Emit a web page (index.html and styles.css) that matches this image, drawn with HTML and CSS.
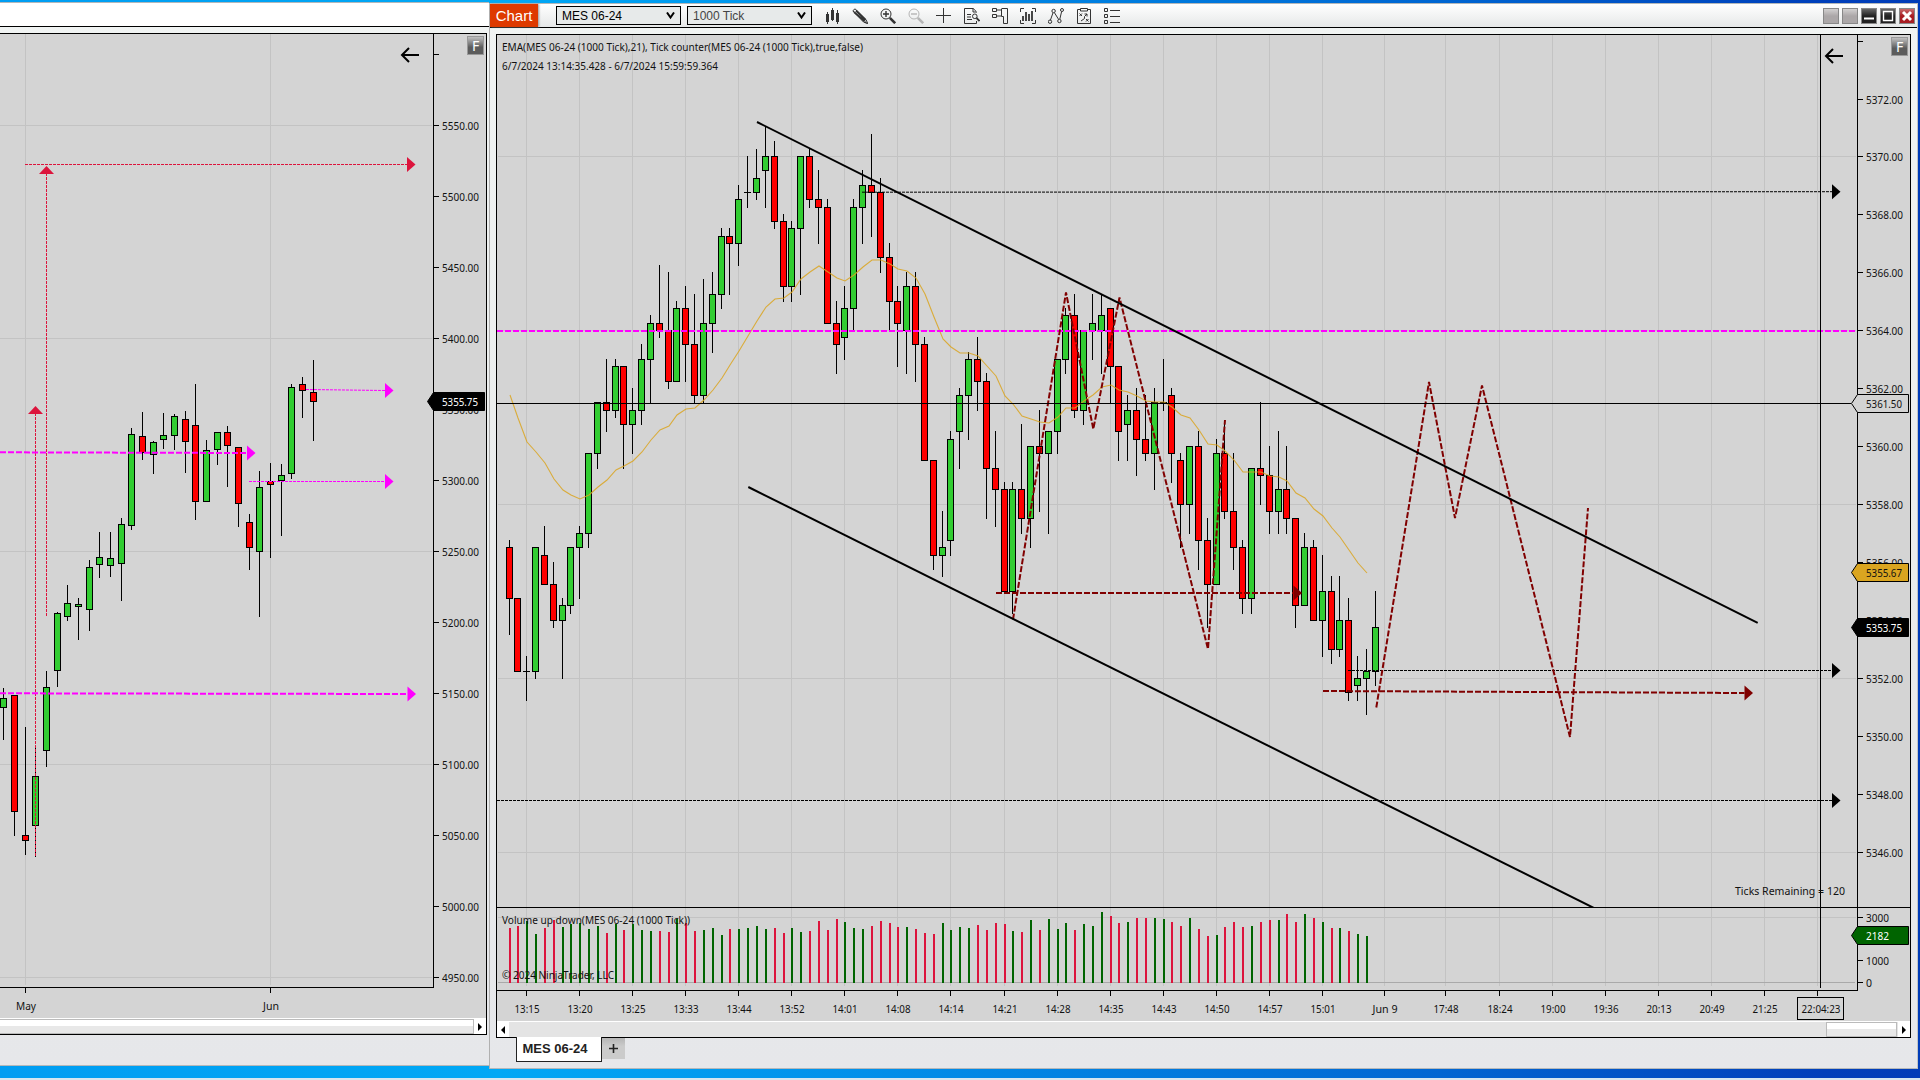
FILE: index.html
```html
<!DOCTYPE html>
<html lang="en">
<head>
    <meta charset="UTF-8">
    <meta name="viewport" content="width=device-width, initial-scale=1.0">
    <title>Chart - MES 06-24</title>
    <link rel="stylesheet" href="styles.css">
</head>
<body>
    <div class="desktop">
        <div class="window window-left">
            <div class="titlebar"></div>
            <div class="chart-frame">
                <svg id="dailyChart" class="chart" width="486" height="984" viewBox="0 34 486 984"></svg>
                <div class="scrollbar">
                    <div class="thumb thumb-wide"></div>
                    <div class="scroll-btn"><svg width="4" height="8"><path d="M0 0L4 4L0 8Z"/></svg></div>
                </div>
            </div>
        </div>

        <div class="window window-right">
            <div class="titlebar">
                <div class="app-label">Chart</div>
                <div class="select select-instrument">MES 06-24<svg width="9" height="8"><path d="M1 0.5L4.5 5.5L8 0.5" class="chevron"/></svg></div>
                <div class="select select-interval"><span>1000 Tick</span><svg width="9" height="8"><path d="M1 0.5L4.5 5.5L8 0.5" class="chevron"/></svg></div>
                <div class="icons">
                    <svg viewBox="0 0 16 16"><path d="M3.5 4V16M8.5 0V13M13.5 2V16" class="s1"/><path d="M2 6h3v8H2zM7 2h3v10H7zM12 5h3v9h-3z" class="f"/></svg>
                    <svg viewBox="0 0 16 16"><path d="M.8 2.8L3 .8L14 11.6L15.8 15.6L11.5 14Z" class="s1"/><path d="M2 4L12.5 13.2M4 2.5L13.6 12" class="s2"/><path d="M13 13L16 16L12 14.5Z" class="f"/></svg>
                    <svg viewBox="0 0 16 16"><circle cx="6" cy="6" r="5" class="s1"/><path d="M3 6H9M6 3V9" class="s15"/><path d="M9.8 9.8L15.2 15.2" class="s3"/></svg>
                    <svg viewBox="0 0 16 16" class="disabled"><circle cx="6" cy="6" r="5" class="s1"/><path d="M3 6H9" class="s15"/><path d="M9.8 9.8L15.2 15.2" class="s3"/></svg>
                    <svg viewBox="0 0 16 16"><path d="M0 7.5H15M7.5 0V15" class="s1"/></svg>
                    <svg viewBox="0 0 16 16"><path d="M12.5 4.5V3.8L9.2.5H.5V15.5H12.5V13M9 .5V4H12M3 6.5H7M3 9H7M3 11.5H8" class="s1"/><circle cx="10.8" cy="8.3" r="2.3" class="s1"/><path d="M12.5 10L15.5 13" class="s2"/></svg>
                    <svg viewBox="0 0 16 16"><path d="M.5 .5H4.5V3.5H.5ZM.5 6.5H4.5V9.5H.5ZM4.5 2H9M4.5 8H9M9.5 1V8.5H11.5V15.5H15.5V.5H9.5" class="s1"/></svg>
                    <svg viewBox="0 0 16 16"><path d="M.5 4V.5H4M12 .5H15.5V4M15.5 12V15.5H12M4 15.5H.5V12" class="s1"/><path d="M3 13V8M6 13V4M9 13V6M12 13V3" class="s2"/></svg>
                    <svg viewBox="0 0 16 16"><path d="M2.4 12.2L5 4.8M6.5 4.8L10.6 11.4M11.8 11.2L13.6 3.6" class="s1"/><circle cx="2" cy="13.7" r="1.7" class="s1"/><circle cx="5.6" cy="3" r="1.7" class="s1"/><circle cx="11.4" cy="13" r="1.7" class="s1"/><circle cx="14" cy="2" r="1.5" class="s1"/></svg>
                    <svg viewBox="0 0 16 16"><path d="M4 1.5H1.5V15.5H14.5V1.5H12M4.5 .5H11.5V3H4.5ZM3.5 5.5L6 8M6 5.5L3.5 8M10 11L12.5 13.5M12.5 11L10 13.5M5 13L8.5 10.5V8.5L11 6M8.5 6H11V8.5" class="s1"/></svg>
                    <svg viewBox="0 0 16 16"><path d="M.5 .5H3.5V3.5H.5ZM.5 6.5H3.5V9.5H.5ZM.5 12.5H3.5V15.5H.5ZM6 2.5H16M6 8.5H16M6 14.5H16" class="s1"/></svg>
                </div>
                <div class="win-buttons">
                    <div class="wb"></div>
                    <div class="wb"></div>
                    <div class="wb dark"><svg viewBox="0 0 14 14"><path d="M2 9.5H12" class="w2"/></svg></div>
                    <div class="wb dark"><svg viewBox="0 0 14 14"><path d="M2.5 2.5H11.5V11.5H2.5Z" class="w1"/></svg></div>
                    <div class="wb close"><svg viewBox="0 0 14 14"><path d="M3 3L11 11M11 3L3 11" class="w3"/></svg></div>
                </div>
            </div>
            <div class="chart-frame">
                <svg id="tickChart" class="chart" width="1413" height="986" viewBox="497 35 1413 986"></svg>
                <div class="scrollbar">
                    <div class="scroll-btn"><svg width="4" height="8"><path d="M4 0L0 4L4 8Z"/></svg></div>
                    <div class="thumb thumb-small"></div>
                    <div class="scroll-btn"><svg width="4" height="8"><path d="M0 0L4 4L0 8Z"/></svg></div>
                </div>
            </div>
            <div class="tabs">
                <div class="tab">MES 06-24</div>
                <div class="tab-add"><svg width="9" height="9"><path d="M0 4.5H9M4.5 0V9"/></svg></div>
            </div>
        </div>
    </div>
    <div class="taskbar"></div>
    <script src="chart.js"></script>
</body>
</html>
```

FILE: styles.css
```css
* {
    box-sizing: border-box;
}

body {
    margin: 0;
    width: 1920px;
    height: 1080px;
    overflow: hidden;
    display: flex;
    flex-direction: column;
    font-family: "Liberation Sans", Arial, sans-serif;
    background: linear-gradient(to right, #009df2 0, #00a8f5 26%, #0090ea 45%, #0066d2 75%, #003fba 95%, #003cb8 100%);
}

.desktop {
    height: 1078px;
    display: flex;
    align-items: flex-start;
}

.taskbar {
    height: 2px;
    background: #d5e6f0;
}

.window {
    display: flex;
    flex-direction: column;
    background: linear-gradient(#f1f4f3, #e9ebeb 60%, #e6e7ea);
    border-top: 1px solid #b4b8ba;
    border-bottom: 1px solid #b4b8ba;
}

.window-left {
    width: 489px;
    height: 1064px;
    margin-top: 2px;
}

.window-right {
    width: 1429px;
    height: 1066px;
    margin-top: 3px;
    border-left: 1px solid #b0b0b0;
    border-right: 1px solid #c0c4c8;
}

.titlebar {
    height: 24px;
    flex: none;
    display: flex;
    align-items: center;
    background: #fff;
    border-bottom: 1px solid #000;
}

.window-right .titlebar {
    background: linear-gradient(#fff, #e6e8e8);
}

.app-label {
    width: 39px;
    height: 23px;
    margin-right: 27px;
    text-align: center;
    line-height: 23px;
    font-size: 15px;
    color: #fff;
    background: #de3a00;
    box-shadow: 1px 0 2px #999;
    width: 48px;
    margin-right: 18px;
}

.select {
    width: 125px;
    height: 19px;
    padding: 0 5px;
    display: flex;
    align-items: center;
    justify-content: space-between;
    font-size: 12px;
    color: #000;
    background: #e7eaea;
    border: 1px solid #000;
}

.select-interval {
    margin-left: 6px;
    color: #444;
}

.chevron {
    fill: none;
    stroke: #000;
    stroke-width: 2;
}

.icons {
    display: flex;
    gap: 12px;
    margin-left: 12px;
}

.icons svg {
    width: 16px;
    height: 16px;
    color: #333;
}

.icons svg.disabled {
    color: #b5b5b5;
}

.s1, .s15, .s2, .s3 {
    fill: none;
    stroke: currentColor;
}

.s15 {
    stroke-width: 1.4;
}

.s2 {
    stroke-width: 1.8;
}

.s3 {
    stroke-width: 2.6;
}

.f {
    fill: currentColor;
}

.win-buttons {
    display: flex;
    gap: 3px;
    margin-left: auto;
    margin-right: 2px;
}

.wb {
    width: 16px;
    height: 16px;
    border: 1px solid #888;
    background: linear-gradient(#d2d0d0, #aba7a8 50%);
}

.wb svg {
    display: block;
    fill: none;
    stroke: #fff;
}

.wb.dark {
    background: linear-gradient(#666, #222 50%);
}

.wb.close {
    background: linear-gradient(#c76b6c, #a81d22 50%);
}

.w1 {
    stroke-width: 1.4;
}

.w2 {
    stroke-width: 2;
}

.w3 {
    stroke-width: 3;
}

.chart-frame {
    flex: none;
    border: 1px solid #000;
    background: #d4d4d4;
}

.window-left .chart-frame {
    width: 487px;
    height: 1002px;
    margin-top: 6px;
    border-left: none;
}

.window-right .chart-frame {
    width: 1415px;
    height: 1004px;
    margin: 6px 0 0 6px;
}

.chart {
    display: block;
}

.scrollbar {
    height: 16px;
    display: flex;
    align-items: stretch;
    background: #e4e4e4;
    border-top: 1px solid #fff;
}

.scroll-btn {
    width: 12px;
    display: flex;
    align-items: center;
    justify-content: center;
    background: #fff;
}

.thumb {
    border: 1px solid #bbb;
    background: linear-gradient(#fff 45%, #e8e8e8 50%);
}

.thumb-wide {
    flex: 1;
    border-left: none;
}

.thumb-small {
    width: 71px;
    margin-left: auto;
    margin-right: 1px;
}

.tabs {
    display: flex;
    align-items: flex-start;
    margin: -1px 0 0 26px;
}

.tab {
    width: 86px;
    height: 25px;
    border: 1px solid #222;
    border-top: none;
    background: #fff;
    font-size: 13px;
    font-weight: bold;
    line-height: 23px;
    text-align: center;
    color: #222;
    padding-right: 8px;
}

.tab-add {
    width: 23px;
    height: 21px;
    margin-top: 1px;
    display: flex;
    align-items: center;
    justify-content: center;
    background: linear-gradient(#b5b5b5, #cbcbcb 40%);
}

.tab-add path {
    stroke: #222;
    stroke-width: 1.6;
}

/* chart drawing */
.label {
    font-family: "Noto Sans", "Open Sans", sans-serif;
    font-size: 11px;
    fill: #111;
}

.label.light {
    fill: #fff;
}

.grid {
    stroke: #c3c3c3;
}

.zero {
    stroke: #a9a9a9;
}

.axis, .wick {
    stroke: #000;
}

.up {
    fill: #32cd32;
    stroke: #000;
}

.down {
    fill: #f00;
    stroke: #000;
}

.vol-up {
    fill: #006400;
}

.vol-down {
    fill: #dc143c;
}

.ema {
    fill: none;
    stroke: #daa520;
    stroke-width: 1.1;
    opacity: .85;
}

.trend {
    stroke: #000;
    stroke-width: 2;
}

.zigzag {
    fill: none;
    stroke: #800000;
    stroke-width: 2;
    stroke-dasharray: 6 2;
}
```

FILE: chart.js
```js
const NS = "http://www.w3.org/2000/svg";

function add(parent, tag, attrs, text) {
    const el = document.createElementNS(NS, tag);
    for (const k in attrs) el.setAttribute(k, attrs[k]);
    if (text) el.textContent = text;
    parent.appendChild(el);
    return el;
}

function line(svg, x1, y1, x2, y2, cls) {
    add(svg, "line", { x1, y1, x2, y2, class: cls });
}

function label(svg, x, y, text, width, extra) {
    add(svg, "text", Object.assign({ x, y, class: "label", textLength: width, lengthAdjust: "spacingAndGlyphs" }, extra), text);
}

function candle(svg, x, h, top, bottom, l, dir) {
    if (top === bottom) {
        line(svg, x + .5, h, x + .5, l + 1, "wick");
        line(svg, x - 3, top + .5, x + 4, top + .5, "wick");
        return;
    }
    line(svg, x + .5, h, x + .5, l + 1, "wick");
    add(svg, "rect", { x: x - 2.5, y: top + .5, width: 6, height: bottom - top, class: dir === "u" ? "up" : "down" });
}

// dashed line with a triangle head, (x2, y2) is the base of the head
function arrow(svg, x1, y1, x2, y2, color, w) {
    add(svg, "line", { x1, y1, x2, y2, stroke: color, "stroke-width": w, "stroke-dasharray": w === 1 ? "3 1" : "6 2" });
    const d = x1 === x2
        ? `M${x2 - 7.5} ${y2}L${x2} ${y2 - 8}L${x2 + 7.5} ${y2}Z`
        : `M${x2} ${y2 - 7.5}L${x2 + 8.5} ${y2}L${x2} ${y2 + 7.5}Z`;
    add(svg, "path", { d, fill: color });
}

function tag(svg, x, y, text, fill, stroke, textCls, w) {
    const r = x + 58;
    add(svg, "path", { d: `M${x + .5} ${y + .5}L${x + 6.5} ${y - 8.5}H${r - .5}V${y + 9.5}H${x + 6.5}Z`, fill, stroke });
    label(svg, x + 15, y + 5, text, w, { class: "label " + textCls });
}

function backArrow(svg, x, y) {
    add(svg, "path", { d: `M${x + 18} ${y}H${x + 1}M${x + 8} ${y - 7}L${x + 1} ${y}L${x + 8} ${y + 7}`, fill: "none", stroke: "#000", "stroke-width": 2 });
}

function badge(svg, x, y, id) {
    const g = add(svg, "linearGradient", { id, x1: 0, y1: 0, x2: 0, y2: 1 });
    add(g, "stop", { offset: 0, "stop-color": "#c4c4c4" });
    add(g, "stop", { offset: .6, "stop-color": "#5c5c5c" });
    add(svg, "rect", { x: x + .5, y: y + .5, width: 16, height: 18, fill: `url(#${id})`, stroke: "#999" });
    add(svg, "text", { x: x + 5, y: y + 15, class: "label light", style: "font-size:14px" }, "F");
}

/* ---------- daily chart ---------- */
const daily = document.getElementById("dailyChart");

[125, 338, 551, 764, 977].forEach(y => line(daily, 0, y + .5, 432, y + .5, "grid"));
[25, 270].forEach(x => line(daily, x + .5, 34, x + .5, 985, "grid"));

// x, high, body top, body bottom, low, direction
const dailyBars = [
    [3, 688, 698, 707, 739, "u"], [14, 695, 695, 811, 835, "d"], [25, 727, 835, 840, 854, "d"],
    [35, 745, 776, 825, 856, "u"], [46, 671, 687, 750, 766, "u"], [57, 612, 613, 670, 686, "u"],
    [67, 585, 603, 616, 620, "u"], [78, 598, 604, 606, 639, "u"], [89, 560, 567, 609, 630, "u"],
    [99, 532, 557, 564, 577, "u"], [110, 532, 558, 565, 576, "u"], [121, 518, 524, 563, 600, "u"],
    [131, 428, 434, 525, 529, "u"], [142, 412, 436, 452, 459, "d"], [153, 441, 442, 454, 473, "u"],
    [163, 413, 435, 439, 448, "u"], [174, 414, 416, 435, 449, "u"], [185, 411, 419, 441, 472, "d"],
    [195, 384, 425, 501, 519, "d"], [206, 440, 450, 501, 501, "u"], [217, 432, 432, 449, 464, "u"],
    [227, 426, 432, 445, 486, "d"], [238, 447, 447, 503, 526, "d"], [249, 514, 522, 547, 569, "d"],
    [259, 471, 487, 551, 616, "u"], [270, 463, 481, 484, 557, "d"], [281, 464, 475, 480, 535, "u"],
    [291, 384, 387, 473, 478, "u"], [302, 377, 384, 390, 417, "d"], [313, 360, 392, 401, 440, "d"]
];
dailyBars.forEach(b => candle(daily, ...b));

arrow(daily, 25, 164.5, 407, 164.5, "#dc143c", 1);
arrow(daily, 46.5, 616, 46.5, 174, "#dc143c", 1);
arrow(daily, 35.5, 856, 35.5, 414, "#dc143c", 1);
arrow(daily, 306, 389.5, 385, 390.5, "#f0f", 1);
arrow(daily, 249, 481.5, 385, 481.5, "#f0f", 1);
arrow(daily, 0, 452.3, 247, 453, "#f0f", 2);
arrow(daily, 0, 693.3, 407.5, 694, "#f0f", 2);

line(daily, 433.5, 34, 433.5, 988, "axis");
line(daily, 0, 987.5, 434, 987.5, "axis");
line(daily, 434, 54.5, 439, 54.5, "axis");
for (let i = 0; i <= 12; i++) {
    const y = 125 + Math.round(i * 71);
    line(daily, 434, y + .5, 439, y + .5, "axis");
    label(daily, 442, y + 5, (5550 - i * 50) + ".00", 37);
}
line(daily, 25.5, 988, 25.5, 993, "axis");
line(daily, 270.5, 988, 270.5, 993, "axis");
label(daily, 16, 1010, "May", 20);
label(daily, 263, 1010, "Jun", 16);
tag(daily, 427, 401, "5355.75", "#000", "#000", "light", 36);
backArrow(daily, 401, 55);
badge(daily, 467, 36, "fLeft");

/* ---------- 1000 tick chart ---------- */
const tick = document.getElementById("tickChart");
const clip = add(tick, "clipPath", { id: "pricePane" });
add(clip, "rect", { x: 497, y: 35, width: 1360, height: 872 });

// one tick is 0.25 points, counted down from 5370
const yTick = k => Math.floor(156.3 + k * 7.25);
const xBar = i => Math.ceil(508.0113 + 8.83923 * i);

[0, 24, 48, 72, 96].forEach(k => line(tick, 498, yTick(k) + .5, 1856, yTick(k) + .5, "grid"));
line(tick, 498, 917.5, 1856, 917.5, "grid");

const times = [
    [526, "13:15"], [579, "13:20"], [632, "13:25"], [685, "13:33"], [738, "13:44"], [791, "13:52"],
    [844, "14:01"], [897, "14:08"], [950, "14:14"], [1004, "14:21"], [1057, "14:28"], [1110, "14:35"],
    [1163, "14:43"], [1216, "14:50"], [1269, "14:57"], [1322, "15:01"], [1384, "Jun 9"], [1445, "17:48"],
    [1499, "18:24"], [1552, "19:00"], [1605, "19:36"], [1658, "20:13"], [1711, "20:49"], [1764, "21:25"], [1817, ""]
];
times.forEach(([x]) => line(tick, x + .5, 35, x + .5, 986, "grid"));
line(tick, 498, 982.5, 1855, 982.5, "zero");

// high, body top, body bottom, low, direction
const bars = [
    [53, 54, 61, 66, "d"], [61, 61, 71, 71, "d"], [69, 71, 71, 75, "u"], [54, 54, 71, 72, "u"], [51, 55, 59, 59, "d"],
    [56, 59, 64, 65, "d"], [61, 62, 64, 72, "u"], [54, 54, 62, 63, "u"], [51, 52, 54, 61, "u"], [41, 41, 52, 54, "u"],
    [34, 34, 41, 43, "u"], [28, 34, 35, 38, "d"], [28, 29, 35, 36, "u"], [29, 29, 37, 43, "d"], [32, 35, 37, 41, "u"],
    [26, 28, 35, 37, "u"], [22, 23, 28, 34, "u"], [15, 23, 24, 25, "d"], [16, 24, 31, 32, "d"], [20, 21, 31, 31, "u"],
    [18, 21, 26, 31, "d"], [19, 26, 33, 34, "d"], [17, 23, 33, 34, "u"], [16, 19, 23, 27, "u"], [10, 11, 19, 21, "u"],
    [10, 11, 12, 19, "d"], [4, 6, 12, 15, "u"], [0, 5, 5, 7, "u"], [-1, 3, 5, 6, "u"], [-4, 0, 2, 7, "u"],
    [-2, 0, 9, 10, "d"], [8, 9, 18, 20, "d"], [9, 10, 18, 20, "u"], [0, 0, 10, 19, "u"], [-1, 0, 6, 7, "d"],
    [2, 6, 7, 12, "d"], [6, 7, 23, 23, "d"], [20, 23, 26, 30, "d"], [18, 21, 25, 28, "u"], [6, 7, 21, 24, "u"],
    [2, 4, 7, 12, "u"], [-3, 4, 5, 11, "d"], [3, 5, 14, 16, "d"], [12, 14, 20, 24, "d"], [18, 20, 23, 29, "d"],
    [16, 18, 24, 30, "u"], [16, 18, 26, 31, "d"], [25, 26, 42, 42, "d"], [42, 42, 55, 57, "d"], [49, 54, 55, 58, "u"],
    [38, 39, 53, 55, "u"], [32, 33, 38, 43, "u"], [27, 28, 33, 39, "u"], [25, 28, 31, 35, "d"], [30, 31, 43, 50, "d"],
    [38, 43, 46, 51, "d"], [45, 46, 60, 60, "d"], [45, 46, 60, 63, "u"], [37, 46, 50, 52, "d"], [40, 40, 50, 54, "u"],
    [35, 40, 41, 49, "d"], [38, 38, 41, 52, "u"], [28, 28, 38, 41, "u"], [21, 22, 28, 30, "u"], [19, 22, 35, 36, "d"],
    [24, 24, 35, 37, "u"], [19, 23, 24, 28, "u"], [19, 22, 24, 30, "u"], [21, 21, 29, 34, "d"], [29, 29, 38, 42, "d"],
    [33, 35, 37, 42, "u"], [32, 35, 39, 44, "d"], [33, 39, 41, 42, "d"], [32, 34, 41, 46, "u"], [28, 34, 34, 35, "u"],
    [32, 33, 41, 45, "d"], [41, 42, 48, 54, "d"], [40, 40, 48, 52, "u"], [38, 40, 53, 57, "d"], [50, 53, 59, 65, "d"],
    [39, 41, 59, 59, "u"], [37, 41, 49, 50, "d"], [41, 49, 54, 57, "d"], [53, 54, 61, 63, "d"], [43, 43, 61, 63, "u"],
    [34, 43, 44, 48, "d"], [40, 44, 49, 52, "d"], [38, 46, 49, 52, "u"], [40, 46, 50, 52, "d"], [50, 50, 62, 65, "d"],
    [52, 54, 62, 62, "u"], [53, 54, 64, 64, "d"], [55, 60, 64, 69, "u"], [58, 60, 68, 70, "d"], [58, 64, 68, 69, "u"],
    [61, 64, 74, 75, "d"], [69, 72, 73, 75, "u"], [68, 71, 72, 77, "u"], [60, 65, 71, 73, "u"]
];
bars.forEach((b, i) => candle(tick, xBar(i), yTick(b[0]), yTick(b[1]), yTick(b[2]), yTick(b[3]), b[4]));

// volume bar heights in px
const volume = [
    55, 57, 62, 49, 55, 63, 56, 59, 60, 54, 57, 50, 59, 53, 59, 53, 52, 52, 51, 64, 60, 52, 53, 55, 48,
    54, 54, 55, 57, 54, 55, 50, 55, 51, 52, 62, 53, 64, 61, 55, 54, 57, 62, 60, 56, 56, 54, 50, 49, 60,
    53, 56, 55, 58, 53, 60, 59, 52, 51, 63, 53, 64, 54, 60, 53, 59, 57, 71, 67, 60, 61, 65, 65, 65, 64,
    61, 57, 65, 54, 47, 48, 56, 61, 56, 57, 61, 63, 63, 69, 61, 69, 65, 61, 55, 55, 52, 49, 47
];
volume.forEach((v, i) => add(tick, "rect", {
    x: xBar(i), y: 983 - v, width: 2, height: v, class: bars[i][4] === "u" ? "vol-up" : "vol-down"
}));

const ema = [
    395, 418, 442, 452, 463, 479, 490, 495, 499, 495, 487, 480, 470, 466, 461, 452, 440, 430, 426, 415, 409, 408, 400, 390, 378,
    365, 351, 336, 321, 307, 299, 298, 292, 279, 272, 266, 272, 278, 281, 275, 267, 260, 260, 264, 269, 271, 278, 294, 317, 339,
    347, 353, 353, 356, 366, 376, 396, 404, 416, 419, 422, 423, 417, 408, 408, 401, 395, 387, 385, 390, 392, 396, 401, 402, 402,
    407, 415, 418, 430, 444, 445, 451, 460, 472, 472, 472, 476, 477, 481, 493, 498, 509, 516, 528, 537, 550, 563, 573
];
add(tick, "polyline", { points: ema.map((y, i) => (xBar(i) + 1) + "," + y).join(" "), class: "ema" });

// drawings
add(tick, "line", { x1: 497, y1: 331, x2: 1857, y2: 331, stroke: "#f0f", "stroke-width": 2, "stroke-dasharray": "6 2" });
arrow(tick, 862, 192.2, 1832, 191.7, "#000", 1);
arrow(tick, 1348, 670.5, 1832, 670.5, "#000", 1);
arrow(tick, 497, 800.5, 1832, 800.5, "#000", 1);
arrow(tick, 996, 593, 1293.5, 593, "#800000", 2);
arrow(tick, 1323, 691, 1744.5, 693, "#800000", 2);
add(tick, "polyline", { points: "1013,619.5 1066,292.5 1093.3,429 1119.5,297.5 1208,649 1225,420", class: "zigzag" });
add(tick, "polyline", { points: "1376.3,707.5 1429,382 1455,518 1482,385.5 1570,737 1588,508", class: "zigzag" });
line(tick, 757, 122, 1757.7, 622.8, "trend");
add(tick, "line", { x1: 748.3, y1: 487, x2: 1600, y2: 911, class: "trend", "clip-path": "url(#pricePane)" });

// crosshair
line(tick, 497, 403.5, 1851, 403.5, "axis");
line(tick, 1820.5, 35, 1820.5, 988, "axis");

// axes
line(tick, 1857.5, 35, 1857.5, 991, "axis");
line(tick, 497, 907.5, 1910, 907.5, "axis");
line(tick, 497, 990.5, 1858, 990.5, "axis");
line(tick, 1858, 41.5, 1863, 41.5, "axis");
for (let p = 5372; p >= 5346; p -= 2) {
    const y = yTick((5370 - p) * 4) + (p === 5372 ? 1 : 0);
    line(tick, 1858, y + .5, 1863, y + .5, "axis");
    label(tick, 1866, y + 5, p + ".00", 37);
}
[[917, "3000", 23], [960, "1000", 23], [982, "0", 6]].forEach(([y, t, w]) => {
    line(tick, 1858, y + .5, 1863, y + .5, "axis");
    label(tick, 1866, y + 5, t, w);
});
times.forEach(([x, t]) => {
    line(tick, x + .5, 991, x + .5, 996, "axis");
    if (t) label(tick, x - 11.5, 1013, t, 25);
});
add(tick, "rect", { x: 1797.5, y: 997.5, width: 46, height: 22, fill: "#d4d4d4", stroke: "#000" });
label(tick, 1801.5, 1013, "22:04:23", 39);

tag(tick, 1851, 403, "5361.50", "#d3d3d3", "#000", "", 36);
tag(tick, 1851, 572, "5355.67", "#daa520", "#000", "", 36);
tag(tick, 1851, 627, "5353.75", "#000", "#000", "light", 36);
tag(tick, 1851, 935, "2182", "#006400", "#000", "light", 23);

label(tick, 502, 51, "EMA(MES 06-24 (1000 Tick),21), Tick counter(MES 06-24 (1000 Tick),true,false)", 361);
label(tick, 502, 70, "6/7/2024 13:14:35.428 - 6/7/2024 15:59:59.364", 216);
label(tick, 502, 924, "Volume up down(MES 06-24 (1000 Tick))", 188);
label(tick, 502, 979, "\u00a9 2024 NinjaTrader, LLC", 112);
label(tick, 1735, 895, "Ticks Remaining = 120", 110);
backArrow(tick, 1825, 56);
badge(tick, 1891, 37, "fRight");
```
